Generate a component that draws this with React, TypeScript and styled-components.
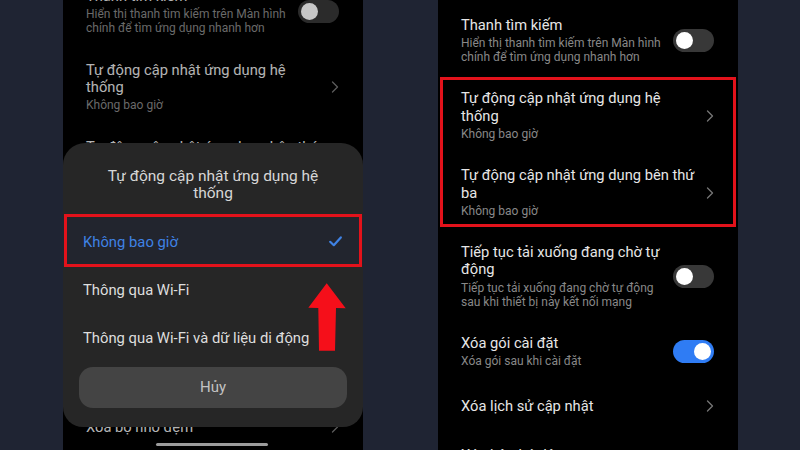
import React from "react";
import styled, { createGlobalStyle } from "styled-components";

const GlobalStyle = createGlobalStyle`
  html, body { margin: 0; padding: 0; background: #1f2433; }
  body { font-family: Roboto, "Noto Sans", "DejaVu Sans", sans-serif; -webkit-font-smoothing: antialiased; }
`;

const Stage = styled.div`
  width: 800px;
  height: 450px;
  overflow: hidden;
  background: #1f2433;
  display: flex;
  gap: 75px;
  padding-left: 63px;
  box-sizing: border-box;
`;

const Phone = styled.div`
  position: relative;
  flex: none;
  width: 300px;
  height: 450px;
  overflow: hidden;
  background: #000;
`;

const List = styled.div<{ $shift: number }>`
  display: flex;
  flex-direction: column;
  margin-top: ${(p) => p.$shift}px;
`;

const Row = styled.div<{ $single?: boolean }>`
  display: flex;
  align-items: center;
  gap: 6px;
  padding: ${(p) => (p.$single ? "16px" : "13px")} 24px ${(p) => (p.$single ? "16px" : "13px")} 23px;
`;

const Texts = styled.div`
  flex: 1;
  min-width: 0;
  display: flex;
  flex-direction: column;
  gap: 1.6px;
`;

const Title = styled.div`
  font-size: 14.7px;
  line-height: 17.5px;
  color: #e6e6e6;
`;

const Sub = styled.div`
  font-size: 12px;
  line-height: 14.3px;
  color: #888888;
`;

const Track = styled.div<{ $on: boolean }>`
  flex: none;
  width: 41px;
  height: 23px;
  border-radius: 12px;
  box-sizing: border-box;
  padding: 0 3px;
  display: flex;
  align-items: center;
  justify-content: ${(p) => (p.$on ? "flex-end" : "flex-start")};
  background: ${(p) => (p.$on ? "#2f7cf4" : "#383838")};
`;

const Knob = styled.div`
  width: 17px;
  height: 17px;
  border-radius: 50%;
  background: #ffffff;
`;

const Chevron = styled.svg`
  flex: none;
  width: 8px;
  height: 12px;
`;

const Highlight = styled.div<{ $top: number; $bottom: number; $side: number }>`
  position: relative;
  &::after {
    content: "";
    position: absolute;
    top: ${(p) => p.$top}px;
    bottom: ${(p) => p.$bottom}px;
    left: ${(p) => p.$side}px;
    right: ${(p) => p.$side}px;
    border: 3px solid #e3121b;
    pointer-events: none;
  }
`;

const Backdrop = styled.div`
  position: absolute;
  inset: 0;
  background: rgba(0, 0, 0, 0.22);
`;

const Sheet = styled.div`
  position: absolute;
  top: 143px;
  left: 0;
  right: 0;
  background: #262626;
  border-radius: 22px 22px 20px 20px;
  padding: 24.5px 0 19px;
  display: flex;
  flex-direction: column;
`;

const SheetTitle = styled.div`
  font-size: 15.5px;
  line-height: 17.6px;
  color: #d6d6d6;
  text-align: center;
  padding: 0 30px;
`;

const Options = styled.div`
  margin-top: 15px;
  display: flex;
  flex-direction: column;
`;

const Option = styled.div<{ $selected?: boolean }>`
  position: relative;
  height: 48px;
  display: flex;
  align-items: center;
  justify-content: space-between;
  padding: 0 21px 0 20px;
  font-size: 14.8px;
  color: ${(p) => (p.$selected ? "#3f82e4" : "#dedede")};
  background: ${(p) => (p.$selected ? "#22252e" : "transparent")};
`;

const OptionBox = styled.div`
  position: absolute;
  top: -4px;
  bottom: -1px;
  left: 1px;
  right: 1px;
  border: 3px solid #e3121b;
  pointer-events: none;
`;

const CancelButton = styled.div`
  margin: 5px 16px 0;
  height: 41px;
  border-radius: 14px;
  background: #444444;
  color: #c2c2c2;
  font-size: 15px;
  display: flex;
  align-items: center;
  justify-content: center;
`;

const HomeBar = styled.div`
  position: absolute;
  bottom: 4px;
  left: 50%;
  width: 112px;
  height: 3px;
  margin-left: -57px;
  border-radius: 2px;
  background: #9c9c9c;
`;

const Arrow = styled.svg`
  position: absolute;
  left: 244px;
  top: 282px;
  width: 40px;
  height: 70px;
`;

type Item = {
  title: string;
  sub?: string;
  kind: "toggle" | "chevron";
  on?: boolean;
};

const items: Item[] = [
  { title: "Thanh tìm kiếm", sub: "Hiển thị thanh tìm kiếm trên Màn hình chính để tìm ứng dụng nhanh hơn", kind: "toggle", on: false },
  { title: "Tự động cập nhật ứng dụng hệ thống", sub: "Không bao giờ", kind: "chevron" },
  { title: "Tự động cập nhật ứng dụng bên thứ ba", sub: "Không bao giờ", kind: "chevron" },
  { title: "Tiếp tục tải xuống đang chờ tự động", sub: "Tiếp tục tải xuống đang chờ tự động sau khi thiết bị này kết nối mạng", kind: "toggle", on: false },
  { title: "Xóa gói cài đặt", sub: "Xóa gói sau khi cài đặt", kind: "toggle", on: true },
  { title: "Xóa lịch sử cập nhật", kind: "chevron" },
  { title: "Xóa bộ nhớ đệm", kind: "chevron" },
];

const ChevronIcon = () => (
  <Chevron viewBox="0 0 8 12">
    <path d="M1.5 1 L6.5 6 L1.5 11" fill="none" stroke="#767676" strokeWidth="1.3" strokeLinecap="round" strokeLinejoin="round" />
  </Chevron>
);

const SettingRow = ({ item }: { item: Item }) => (
  <Row $single={!item.sub}>
    <Texts>
      <Title>{item.title}</Title>
      {item.sub && <Sub>{item.sub}</Sub>}
    </Texts>
    {item.kind === "toggle" ? (
      <Track $on={!!item.on}>
        <Knob />
      </Track>
    ) : (
      <ChevronIcon />
    )}
  </Row>
);

const SettingsList = ({ shift, boxed }: { shift: number; boxed: boolean }) => (
  <List $shift={shift}>
    <SettingRow item={items[0]} />
    {boxed ? (
      <Highlight $top={-0.5} $bottom={3.5} $side={2}>
        <SettingRow item={items[1]} />
        <SettingRow item={items[2]} />
      </Highlight>
    ) : (
      <>
        <SettingRow item={items[1]} />
        <SettingRow item={items[2]} />
      </>
    )}
    {items.slice(3).map((it) => (
      <SettingRow key={it.title} item={it} />
    ))}
  </List>
);

export default function App() {
  return (
    <>
      <GlobalStyle />
      <Stage>
        <Phone>
          <SettingsList shift={-25} boxed={false} />
          <Backdrop />
          <Sheet>
            <SheetTitle>Tự động cập nhật ứng dụng hệ thống</SheetTitle>
            <Options>
              <Option $selected>
                <span>Không bao giờ</span>
                <svg width="13" height="11" viewBox="0 0 13 11">
                  <path d="M1.2 5.8 L4.8 9.2 L11.8 1.4" fill="none" stroke="#3f82e4" strokeWidth="2.2" strokeLinecap="round" strokeLinejoin="round" />
                </svg>
                <OptionBox />
              </Option>
              <Option>Thông qua Wi-Fi</Option>
              <Option>Thông qua Wi-Fi và dữ liệu di động</Option>
            </Options>
            <CancelButton>Hủy</CancelButton>
          </Sheet>
          <Arrow viewBox="0 0 40 70">
            <polygon points="19.7,1.3 38.7,26.3 29,26 28,68.7 12,68.7 11.3,26 1.3,25.7" fill="#f50f1a" />
          </Arrow>
          <HomeBar />
        </Phone>
        <Phone>
          <SettingsList shift={3.5} boxed />
        </Phone>
      </Stage>
    </>
  );
}
